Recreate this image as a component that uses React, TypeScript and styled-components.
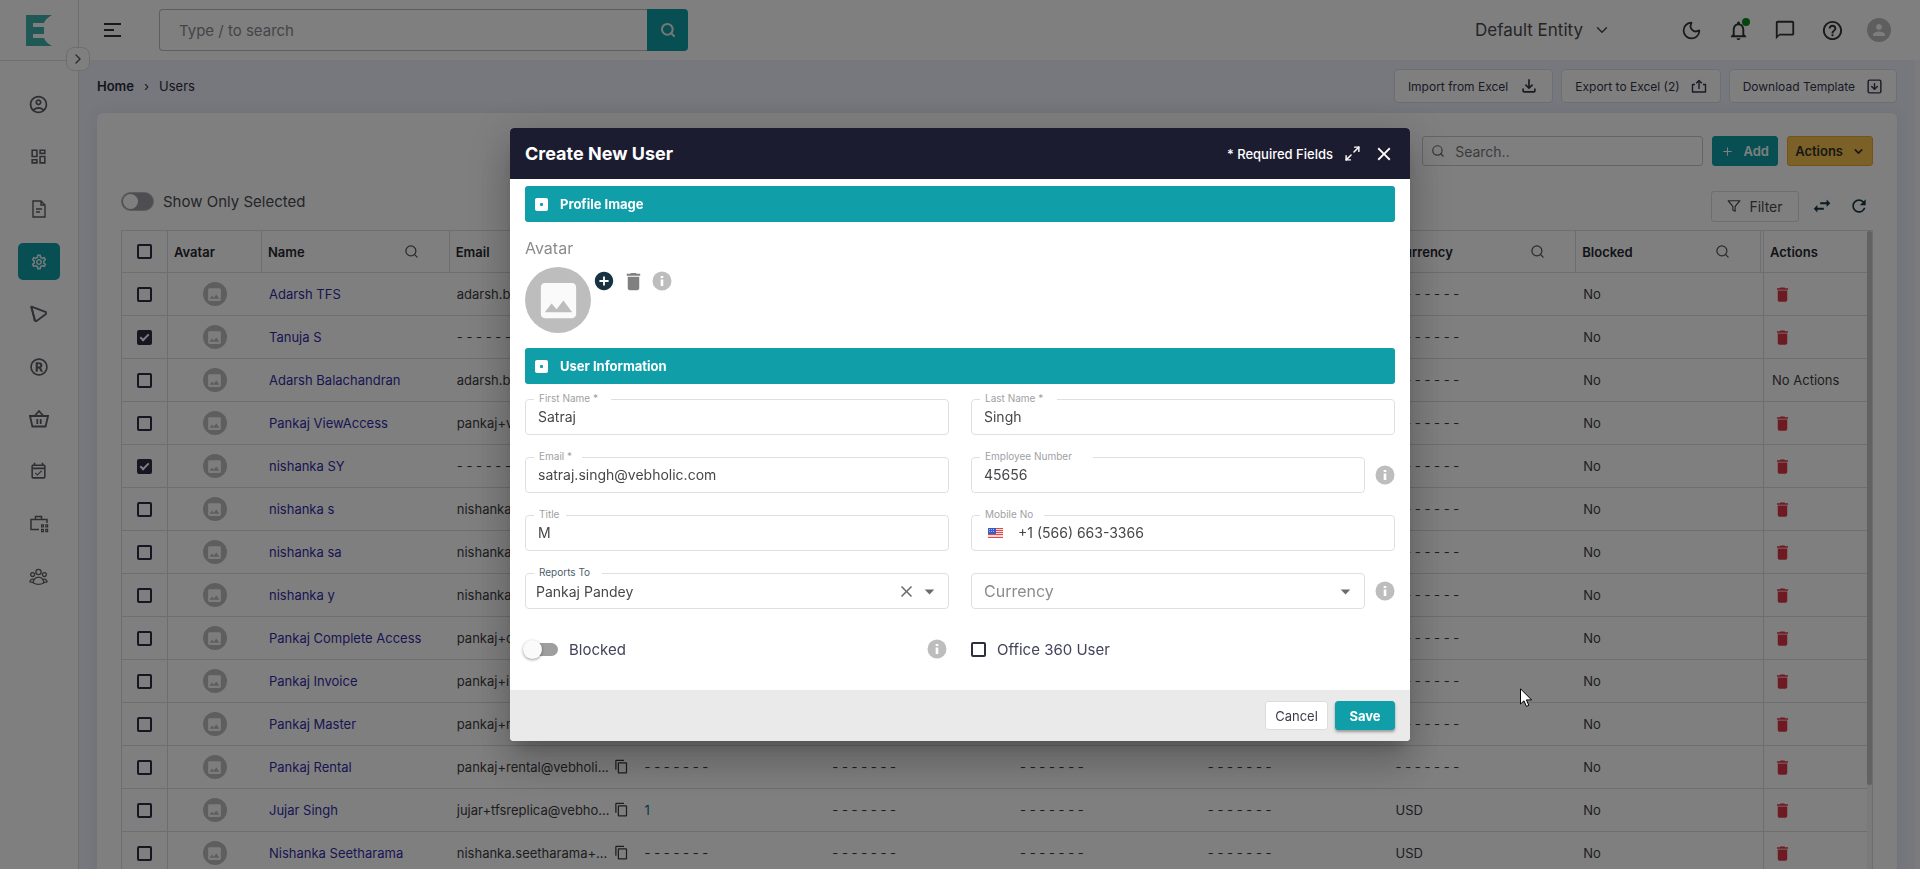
import React from "react";
import styled, { createGlobalStyle } from "styled-components";
import {
  MdAddCircle,
  MdArrowDropDown,
  MdChatBubbleOutline,
  MdClose,
  MdContentCopy,
  MdDelete,
  MdHelpOutline,
  MdImage,
  MdNotificationsNone,
  MdOutlineAccountCircle,
  MdOutlineDashboard,
  MdOutlineEventAvailable,
  MdOutlineFileDownload,
  MdOutlineSettings,
  MdPerson,
  MdRefresh,
  MdSwapHoriz,
} from "react-icons/md";
import { HiOutlineUserGroup } from "react-icons/hi2";
import { FaRegRegistered } from "react-icons/fa";
import { FiFilter } from "react-icons/fi";
import {
  ChevronDown,
  ChevronRight,
  Maximize2,
  Moon,
  Plus,
  Search,
  SquareArrowDown,
} from "lucide-react";

const c = {
  teal: "#109fa9",
  navy: "#1c1c30",
  ink: "#2d2d44",
  line: "#dcdce0",
  text: "#3c3c42",
  muted: "#8c8c8c",
  link: "#332ba6",
  red: "#dc3545",
};

const GlobalStyle = createGlobalStyle`
  *, *::before, *::after { box-sizing: border-box; }
  body { margin: 0; background: #fff; }
  body, button, input, select { font-family: Inter, "Noto Sans", sans-serif; }
  button { padding: 0; border: 0; background: none; color: inherit; cursor: pointer; }
  a { color: inherit; text-decoration: none; }
  svg { display: block; flex: none; }
`;

/* ---------- application shell ---------- */

const Shell = styled.div`
  display: flex;
  height: 100vh;
  overflow: hidden;
`;

const Sidebar = styled.nav`
  position: relative;
  flex: 0 0 79px;
  border-right: 1px solid ${c.line};
  background: #fff;
`;

const LogoBox = styled.a`
  display: flex;
  align-items: center;
  height: 61px;
  padding-left: 26px;
  border-bottom: 1px solid ${c.line};
`;

const ExpandButton = styled.button`
  position: absolute;
  top: 47px;
  right: -12px;
  z-index: 1;
  display: grid;
  place-items: center;
  width: 24px;
  height: 24px;
  border: 1px solid ${c.line};
  border-radius: 8px;
  background: #fff;
  color: #555;
`;

const NavList = styled.ul`
  display: flex;
  flex-direction: column;
  justify-content: space-between;
  height: 534px;
  margin: 0;
  padding: 25px 18px 0;
  list-style: none;
`;

const NavLink = styled.a<{ $active?: boolean }>`
  display: grid;
  place-items: center;
  width: 42px;
  height: 37px;
  padding-right: 1px;
  border-radius: 5px;
  background: ${(p) => (p.$active ? c.teal : "transparent")};
  color: ${(p) => (p.$active ? "#e8f4f6" : "#5f5f66")};
`;

const Page = styled.div`
  display: flex;
  flex: 1;
  flex-direction: column;
  min-width: 0;
`;

const TopBar = styled.header`
  display: flex;
  flex: none;
  align-items: center;
  height: 60px;
  padding: 0 29px 0 25px;
  background: #fff;
  color: #333;
`;

const GlobalSearch = styled.form`
  display: flex;
  width: 529px;
  height: 42px;
  margin-left: 38px;
`;

const GlobalInput = styled.input`
  flex: 1;
  min-width: 0;
  padding: 0 19px;
  border: 1px solid #bdbdc2;
  border-right: 0;
  border-radius: 4px 0 0 4px;
  font-size: 15px;
  color: #333;
  &::placeholder { color: #8a8a92; }
`;

const GlobalSubmit = styled.button`
  display: grid;
  place-items: center;
  width: 41px;
  border-radius: 0 4px 4px 0;
  background: ${c.teal};
  color: #eee;
`;

const EntityButton = styled.button`
  display: flex;
  align-items: center;
  gap: 10px;
  margin: 0 68px 0 auto;
  font-size: 17px;
  color: #4a4a50;
`;

const TopActions = styled.div`
  display: flex;
  align-items: center;
  gap: 23px;
`;

const TopAction = styled.button`
  position: relative;
  display: grid;
  place-items: center;
  width: 24px;
  height: 24px;
`;

const StatusDot = styled.span`
  position: absolute;
  top: 0;
  right: 0;
  width: 8px;
  height: 8px;
  border-radius: 50%;
  background: #0a8a1e;
`;

const ProfileDisc = styled.span`
  display: grid;
  place-items: center;
  width: 24px;
  height: 24px;
  border-radius: 50%;
  background: #bdbdbd;
  color: #fafafa;
`;

const Content = styled.main`
  display: flex;
  flex: 1;
  flex-direction: column;
  min-height: 0;
  padding: 9px 18px 0;
  border-right: 5px solid #f7f7fb;
  background: #eeeffc;
  overflow: hidden;
`;

const PageHead = styled.div`
  display: flex;
  flex: none;
  align-items: center;
  justify-content: space-between;
  margin-bottom: 10px;
`;

const Crumbs = styled.nav`
  display: flex;
  align-items: center;
  gap: 10px;
  font-size: 13px;
  color: #2b2b38;
  & > a { font-weight: 600; }
`;

const HeadActions = styled.div`
  display: flex;
  gap: 8px;
`;

const HeadButton = styled.button`
  display: flex;
  align-items: center;
  gap: 11px;
  height: 34px;
  padding: 0 13px;
  border: 1px solid ${c.line};
  border-radius: 4px;
  background: #fff;
  font-size: 12px;
  color: #35354a;
`;

const Card = styled.section`
  flex: none;
  padding: 23px 24px;
  border-radius: 6px;
  background: #fff;
  box-shadow: 0 0 14px rgba(60, 60, 110, 0.08);
`;

const SearchRow = styled.div`
  display: flex;
  justify-content: flex-end;
  gap: 9px;
  height: 30px;
`;

const ListSearch = styled.label`
  display: flex;
  align-items: center;
  gap: 8px;
  width: 281px;
  padding-left: 8px;
  border: 1px solid #c9c9ce;
  border-radius: 3px;
  color: #66666c;
`;

const ListSearchInput = styled.input`
  flex: 1;
  min-width: 0;
  border: 0;
  outline: 0;
  background: none;
  font-size: 14px;
  &::placeholder { color: #77777d; }
`;

const SolidButton = styled.button<{ $tone: "teal" | "amber" }>`
  display: flex;
  align-items: center;
  justify-content: center;
  gap: 9px;
  min-width: 66px;
  padding: 0 7px;
  border: 1px solid ${(p) => (p.$tone === "teal" ? c.teal : "#eda431")};
  border-radius: 3px;
  background: ${(p) => (p.$tone === "teal" ? c.teal : "#f6c350")};
  color: ${(p) => (p.$tone === "teal" ? "#fff" : "#33302a")};
  font-size: 13px;
  font-weight: 600;
`;

const FilterRow = styled.div`
  display: flex;
  align-items: center;
  justify-content: space-between;
  height: 30px;
  margin: 25px 0 9px;
`;

const SelectedToggle = styled.label`
  display: flex;
  align-items: center;
  align-self: flex-start;
  gap: 9px;
  height: 20px;
  font-size: 15px;
  color: #4a4a52;
`;

const PillSwitch = styled.input`
  appearance: none;
  width: 33px;
  height: 19px;
  margin: 0;
  padding: 1px;
  border: 1px solid #bbb;
  border-radius: 10px;
  background: #9c9ca0;
  &::before {
    content: "";
    display: block;
    width: 15px;
    height: 15px;
    border-radius: 50%;
    background: #fff;
  }
`;

const FilterTools = styled.div`
  display: flex;
  align-items: center;
  padding-right: 5px;
  color: #173642;
`;

const FilterButton = styled.button`
  display: flex;
  align-items: center;
  justify-content: center;
  gap: 8px;
  width: 88px;
  height: 31px;
  margin-right: 13px;
  border: 1px solid ${c.line};
  border-radius: 3px;
  font-size: 14px;
  color: #4a4a50;
`;

const ToolButton = styled.button`
  display: flex;
  align-items: center;
  justify-content: center;
  width: 19px;
  height: 24px;
  & + & { margin-left: 18px; }
`;

/* ---------- users table ---------- */

const TableFrame = styled.div`
  display: grid;
  grid-template-columns: minmax(0, 1fr) 5px;
  border: 1px solid ${c.line};
`;

const Table = styled.table`
  width: 100%;
  border-spacing: 0;
  table-layout: fixed;
  font-size: 13px;
`;

const Col = styled.col<{ $w: number }>`
  width: ${(p) => p.$w}px;
`;

const Th = styled.th<{ $double?: boolean }>`
  height: 42px;
  padding: 0 ${(p) => (p.$double ? 2 : 0)}px 0 0;
  border-bottom: 1px solid ${c.line};
  border-left: 1px solid ${c.line};
  text-align: left;
  font-weight: 600;
  color: #26262e;
  &:first-child { border-left: 0; }
`;

const HeadCell = styled.div<{ $line?: boolean }>`
  display: flex;
  align-items: center;
  justify-content: space-between;
  height: 41px;
  padding: 0 30px 0 6px;
  border-right: ${(p) => (p.$line ? 1 : 0)}px solid ${c.line};
  svg { color: #55555c; }
`;

const Td = styled.td<{ $lined?: boolean; $center?: boolean }>`
  height: 43px;
  padding: 0 8px;
  border-bottom: 1px solid ${c.line};
  border-left: ${(p) => (p.$lined ? 1 : 0)}px solid ${c.line};
  text-align: ${(p) => (p.$center ? "center" : "left")};
  white-space: nowrap;
  color: ${c.text};
`;

const Box = styled.input`
  position: relative;
  display: block;
  appearance: none;
  flex: none;
  width: 15px;
  height: 15px;
  margin: 0;
  border: 2px solid ${c.ink};
  border-radius: 2px;
  td &, th & { margin: 0 auto; }
  &:checked { background: ${c.ink}; }
  &:checked::after {
    content: "";
    position: absolute;
    top: 0;
    left: 3px;
    width: 5px;
    height: 9px;
    border: solid #fff;
    border-width: 0 2px 2px 0;
    transform: rotate(45deg);
  }
`;

const Disc = styled.span<{ $size: number }>`
  display: grid;
  flex: none;
  place-items: center;
  width: ${(p) => p.$size}px;
  height: ${(p) => p.$size}px;
  border-radius: 50%;
  background: #bdbdbd;
  color: #fafafa;
  td & { margin: 0 auto; }
`;

const NameLink = styled.a`
  color: ${c.link};
`;

const EmailCell = styled.span`
  display: flex;
  justify-content: space-between;
`;

const CountLink = styled.a`
  color: #0d6f8c;
`;

const RowDelete = styled.button`
  display: block;
  margin-left: 1px;
  color: ${c.red};
`;

const ScrollTrack = styled.div`
  background: #f4f4f4;
`;

const ScrollThumb = styled.div`
  height: 554px;
  border-radius: 3px;
  background: #c4c4c4;
`;

/* ---------- dialog ---------- */

const Backdrop = styled.div`
  position: fixed;
  inset: 0;
  z-index: 10;
  display: grid;
  place-items: center;
  background: rgba(0, 0, 0, 0.5);
`;

const Dialog = styled.div`
  width: 900px;
  max-width: 94vw;
  border-radius: 4px;
  background: #fff;
  overflow: hidden;
  box-shadow: 0 11px 15px -7px rgba(0, 0, 0, 0.2), 0 24px 38px 3px rgba(0, 0, 0, 0.14),
    0 9px 46px 8px rgba(0, 0, 0, 0.12);
`;

const DialogHead = styled.header`
  display: flex;
  align-items: center;
  height: 51px;
  padding: 0 16px 0 15px;
  background: ${c.navy};
  color: #fff;
`;

const DialogTitle = styled.h2`
  margin: 0 auto 0 0;
  font-size: 18px;
  font-weight: 700;
`;

const RequiredNote = styled.span`
  margin-right: 9px;
  font-size: 13px;
  font-weight: 500;
`;

const HeadIconButton = styled.button`
  display: flex;
  align-items: center;
  justify-content: center;
  width: 20px;
  height: 24px;
  & + & { margin-left: 12px; }
`;

const DialogBody = styled.form`
  padding: 7px 15px 29px;
`;

const SectionBar = styled.h3`
  display: flex;
  align-items: center;
  gap: 12px;
  height: 36px;
  margin: 0;
  padding-left: 10px;
  border-radius: 3px;
  background: ${c.teal};
  font-size: 13px;
  font-weight: 700;
  color: #fff;
`;

const SectionMark = styled.span`
  display: grid;
  place-items: center;
  width: 13px;
  height: 13px;
  border-radius: 2px;
  background: #fff;
  &::after {
    content: "";
    width: 3px;
    height: 3px;
    border-radius: 1px;
    background: ${c.teal};
  }
`;

const AvatarLabel = styled.div`
  margin: 16px 0 9px;
  font-size: 16px;
  line-height: 20px;
  color: ${c.muted};
`;

const AvatarRow = styled.div`
  display: flex;
  margin-bottom: 15px;
`;

const AvatarTools = styled.div`
  display: flex;
  gap: 9px;
  height: 20px;
  margin: 4px 0 0 3px;
`;

const IconButton = styled.button<{ $color: string }>`
  display: flex;
  align-items: center;
  justify-content: center;
  flex: none;
  width: 20px;
  height: 20px;
  color: ${(p) => p.$color};
`;

const FieldGrid = styled.div`
  display: grid;
  grid-template-columns: 1fr 1fr;
  gap: 22px;
  margin-top: 15px;
`;

const FieldCell = styled.div`
  display: flex;
  align-items: center;
  gap: 10px;
`;

const FieldFrame = styled.div`
  position: relative;
  display: flex;
  align-items: center;
  flex: 1;
  height: 36px;
  border: 1px solid #dfdfe1;
  border-radius: 4px;
  color: #6c6c70;
`;

const FieldLabel = styled.label<{ $notch: number; $dark?: boolean }>`
  position: absolute;
  top: -9px;
  left: 8px;
  width: ${(p) => p.$notch}px;
  padding-left: 5px;
  background: #fff;
  font-size: 10px;
  line-height: 14px;
  white-space: nowrap;
  color: ${(p) => (p.$dark ? "#4b5d6b" : "#a0a0a4")};
`;

const TextInput = styled.input`
  flex: 1;
  min-width: 0;
  height: 32px;
  padding: 0 12px 2px;
  border: 0;
  outline: 0;
  background: none;
  font-size: 14px;
  color: #47474b;
`;

const PickList = styled.select<{ $empty?: boolean }>`
  appearance: none;
  flex: 1;
  min-width: 0;
  height: 32px;
  padding: 0 ${(p) => (p.$empty ? 12 : 10)}px;
  border: 0;
  outline: 0;
  background: none;
  font-size: ${(p) => (p.$empty ? 16 : 14)}px;
  color: ${(p) => (p.$empty ? c.muted : "#47474b")};
`;

const Flag = styled.span`
  margin-left: 16px;
  margin-right: 3px;
`;

const PickTools = styled.div`
  display: flex;
  align-items: center;
  gap: 2px;
  padding-right: 7px;
`;

const OptionGrid = styled.div`
  display: grid;
  grid-template-columns: 1fr 1fr;
  gap: 22px;
  margin-top: 28px;
`;

const OptionCell = styled.div`
  display: flex;
  align-items: center;
  justify-content: space-between;
  height: 24px;
  padding-right: 2px;
`;

const OptionLabel = styled.label`
  display: flex;
  align-items: center;
  gap: 11px;
  font-size: 15px;
  color: #43435c;
`;

const ThumbSwitch = styled.input`
  position: relative;
  appearance: none;
  width: 33px;
  height: 13px;
  margin: 0;
  border-radius: 7px;
  background: #9e9e9e;
  &::before {
    content: "";
    position: absolute;
    top: -3px;
    left: -2px;
    width: 19px;
    height: 19px;
    border-radius: 50%;
    background: #fafafa;
    box-shadow: 0 1px 3px rgba(0, 0, 0, 0.4);
  }
`;

const DialogFoot = styled.footer`
  display: flex;
  justify-content: flex-end;
  gap: 7px;
  height: 51px;
  padding: 11px 15px;
  background: #eaeaea;
`;

const FootButton = styled.button<{ $primary?: boolean }>`
  width: ${(p) => (p.$primary ? 60 : 63)}px;
  border: 1px solid ${(p) => (p.$primary ? c.teal : "#dcdcdc")};
  border-radius: 3px;
  background: ${(p) => (p.$primary ? c.teal : "#fff")};
  box-shadow: ${(p) => (p.$primary ? "0 2px 3px rgba(0, 0, 0, 0.35)" : "none")};
  font-size: 13px;
  font-weight: ${(p) => (p.$primary ? 700 : 400)};
  color: ${(p) => (p.$primary ? "#fff" : "#3c3c4c")};
`;

const Pointer = styled.svg`
  position: fixed;
  top: 688px;
  left: 1520px;
  z-index: 20;
`;

/* ---------- drawings ---------- */

const Logo = () => (
  <svg width="26" height="31" viewBox="0 0 26 31" aria-label="Home">
    <path
      d="M0 0H26C22 2 19 5 18 8H7V12H18V19H7V23H18C19 26 22 29 26 31H0Z"
      fill="#3fb0a8"
    />
  </svg>
);

const MenuIcon = () => (
  <svg width="17" height="14" viewBox="0 0 17 14" stroke="#333" strokeWidth="2">
    <path d="M0 1H17M0 7H10M0 13H17" />
  </svg>
);

const DocIcon = () => (
  <svg width="18" height="20" viewBox="0 0 18 20" fill="none" stroke="currentColor" strokeWidth="1.4">
    <path d="M3 2H11L15 6V18H3ZM11 2V6H15M6 10H12M6 13H10" />
  </svg>
);

const PlayIcon = () => (
  <svg width="20" height="20" viewBox="0 0 20 20" fill="none" stroke="currentColor" strokeWidth="1.8" strokeLinejoin="round">
    <path d="M2.5 2.6L17 8.2V10L7.2 17.2L5.6 16.5Z" />
    <path d="M2 2.5L6.5 17.5" />
  </svg>
);

const BasketIcon = () => (
  <svg width="20" height="20" viewBox="0 0 20 20" fill="none" stroke="currentColor" strokeWidth="1.8">
    <path d="M1 7H19L16.6 17.5H3.4ZM6 6.5L10 2L14 6.5M8.3 10V15M11.7 10V15" />
  </svg>
);

const CaseIcon = () => (
  <svg width="20" height="20" viewBox="0 0 20 20" fill="none" stroke="currentColor" strokeWidth="1.5">
    <path d="M10 15.5H2V5.5H18V9M6.5 5V2.5H12.5V5" />
    <path d="M12.6 10.8h1.8v2.2h-1.8zM16.8 10.8h1.8v2.2h-1.8zM12.6 15.4h1.8v2.2h-1.8zM16.8 15.4h1.8v2.2h-1.8z" strokeWidth="1.2" />
  </svg>
);

const ExportIcon = () => (
  <svg width="16" height="16" viewBox="0 0 16 16" fill="none" stroke="currentColor" strokeWidth="1.4" strokeLinejoin="round">
    <path d="M4 6.5H1.5V14H14.5V6.5H12M8 11V2.5M5.2 5.2L8 2.4L10.8 5.2" />
  </svg>
);

const InfoIcon = () => (
  <svg width="20" height="20" viewBox="0 0 20 20">
    <circle cx="10" cy="10" r="9.5" fill="currentColor" />
    <path d="M8.7 5H11.3V7H8.7ZM8.7 8.5H11.3V15H8.7Z" fill="#fff" />
  </svg>
);

const UsFlag = () => (
  <svg width="15" height="10" viewBox="0 0 15 10" role="img" aria-label="United States">
    <rect width="15" height="10" fill="#f6dcdc" />
    <path d="M0 .5H15M0 2.5H15M0 4.5H15M0 6.5H15M0 9.5H15" stroke="#e2464d" />
    <rect width="8" height="6" fill="#3c5bc4" />
    <path d="M1 1.5H7M1 3.5H7" stroke="#9db2ee" strokeDasharray="1 1" />
  </svg>
);

/* ---------- data ---------- */

const BLANK = "- - - - - - -";

interface User {
  name: string;
  email: string;
  picked?: boolean;
  copy?: boolean;
  count?: string;
  currency?: string;
  locked?: boolean;
}

const users: User[] = [
  { name: "Adarsh TFS", email: "adarsh.b" },
  { name: "Tanuja S", email: BLANK, picked: true },
  { name: "Adarsh Balachandran", email: "adarsh.b", locked: true },
  { name: "Pankaj ViewAccess", email: "pankaj+v" },
  { name: "nishanka SY", email: BLANK, picked: true },
  { name: "nishanka s", email: "nishanka" },
  { name: "nishanka sa", email: "nishanka" },
  { name: "nishanka y", email: "nishanka" },
  { name: "Pankaj Complete Access", email: "pankaj+c" },
  { name: "Pankaj Invoice", email: "pankaj+i" },
  { name: "Pankaj Master", email: "pankaj+m" },
  { name: "Pankaj Rental", email: "pankaj+rental@vebholi...", copy: true },
  { name: "Jujar Singh", email: "jujar+tfsreplica@vebho...", copy: true, count: "1", currency: "USD" },
  { name: "Nishanka Seetharama", email: "nishanka.seetharama+...", copy: true, currency: "USD" },
];

const navItems = [
  { label: "Profile", icon: <MdOutlineAccountCircle size={21} /> },
  { label: "Dashboard", icon: <MdOutlineDashboard size={19} /> },
  { label: "Documents", icon: <DocIcon /> },
  { label: "Settings", icon: <MdOutlineSettings size={18} />, active: true },
  { label: "Campaigns", icon: <PlayIcon /> },
  { label: "Brands", icon: <FaRegRegistered size={18} /> },
  { label: "Orders", icon: <BasketIcon /> },
  { label: "Calendar", icon: <MdOutlineEventAvailable size={19} /> },
  { label: "Business", icon: <CaseIcon /> },
  { label: "Teams", icon: <HiOutlineUserGroup size={21} /> },
];

/* ---------- parts ---------- */

function SearchableHead({ title, line }: { title?: string; line?: boolean }) {
  return (
    <Th scope="col" $double={line}>
      <HeadCell $line={line}>
        <span>{title}</span>
        <Search size={15} strokeWidth={2} />
      </HeadCell>
    </Th>
  );
}

function UserRow({ user }: { user: User }) {
  return (
    <tr>
      <Td>
        <Box type="checkbox" defaultChecked={user.picked} aria-label={`Select ${user.name}`} />
      </Td>
      <Td $lined $center>
        <Disc $size={24}>
          <MdImage size={17} />
        </Disc>
      </Td>
      <Td>
        <NameLink href="#user">{user.name}</NameLink>
      </Td>
      <Td>
        <EmailCell>
          {user.email}
          {user.copy && <MdContentCopy size={15} />}
        </EmailCell>
      </Td>
      <Td>{user.count ? <CountLink href="#count">{user.count}</CountLink> : BLANK}</Td>
      <Td>{BLANK}</Td>
      <Td>{BLANK}</Td>
      <Td>{BLANK}</Td>
      <Td>{user.currency ?? BLANK}</Td>
      <Td>No</Td>
      <Td $lined>
        {user.locked ? (
          "No Actions"
        ) : (
          <RowDelete aria-label={`Delete ${user.name}`}>
            <MdDelete size={19} />
          </RowDelete>
        )}
      </Td>
    </tr>
  );
}

function InfoButton() {
  return (
    <IconButton type="button" $color="#bdbdbd" aria-label="More information">
      <InfoIcon />
    </IconButton>
  );
}

interface FieldProps {
  id: string;
  label: string;
  notch: number;
  value: string;
  info?: boolean;
  lead?: React.ReactNode;
}

function Field({ id, label, notch, value, info, lead }: FieldProps) {
  return (
    <FieldCell>
      <FieldFrame>
        <FieldLabel htmlFor={id} $notch={notch}>
          {label}
        </FieldLabel>
        {lead}
        <TextInput id={id} defaultValue={value} />
      </FieldFrame>
      {info && <InfoButton />}
    </FieldCell>
  );
}

function CreateUserDialog() {
  return (
    <Backdrop>
      <Dialog role="dialog" aria-labelledby="dialog-title">
        <DialogHead>
          <DialogTitle id="dialog-title">Create New User</DialogTitle>
          <RequiredNote>* Required Fields</RequiredNote>
          <HeadIconButton aria-label="Expand">
            <Maximize2 size={17} strokeWidth={2} />
          </HeadIconButton>
          <HeadIconButton aria-label="Close">
            <MdClose size={22} />
          </HeadIconButton>
        </DialogHead>
        <DialogBody>
          <SectionBar>
            <SectionMark />
            Profile Image
          </SectionBar>
          <AvatarLabel>Avatar</AvatarLabel>
          <AvatarRow>
            <Disc $size={66}>
              <MdImage size={47} />
            </Disc>
            <AvatarTools>
              <IconButton type="button" $color="#173240" aria-label="Add avatar">
                <MdAddCircle size={22} />
              </IconButton>
              <IconButton type="button" $color="#808080" aria-label="Remove avatar">
                <MdDelete size={23} />
              </IconButton>
              <InfoButton />
            </AvatarTools>
          </AvatarRow>
          <SectionBar>
            <SectionMark />
            User Information
          </SectionBar>
          <FieldGrid>
            <Field id="first" label="First Name *" notch={77} value="Satraj" />
            <Field id="last" label="Last Name *" notch={77} value="Singh" />
            <Field id="email" label="Email *" notch={48} value="satraj.singh@vebholic.com" />
            <Field id="employee" label="Employee Number" notch={113} value="45656" info />
            <Field id="title" label="Title" notch={32} value="M" />
            <Field
              id="mobile"
              label="Mobile No"
              notch={64}
              value="+1 (566) 663-3366"
              lead={
                <Flag>
                  <UsFlag />
                </Flag>
              }
            />
            <FieldCell>
              <FieldFrame>
                <FieldLabel htmlFor="reports" $notch={68} $dark>
                  Reports To
                </FieldLabel>
                <PickList id="reports">
                  <option>Pankaj Pandey</option>
                </PickList>
                <PickTools>
                  <IconButton type="button" $color="#6c6c70" aria-label="Clear">
                    <MdClose size={19} />
                  </IconButton>
                  <MdArrowDropDown size={23} />
                </PickTools>
              </FieldFrame>
            </FieldCell>
            <FieldCell>
              <FieldFrame>
                <PickList aria-label="Currency" $empty>
                  <option>Currency</option>
                </PickList>
                <PickTools>
                  <MdArrowDropDown size={23} />
                </PickTools>
              </FieldFrame>
              <InfoButton />
            </FieldCell>
          </FieldGrid>
          <OptionGrid>
            <OptionCell>
              <OptionLabel>
                <ThumbSwitch type="checkbox" role="switch" />
                Blocked
              </OptionLabel>
              <InfoButton />
            </OptionCell>
            <OptionCell>
              <OptionLabel>
                <Box type="checkbox" />
                Office 360 User
              </OptionLabel>
            </OptionCell>
          </OptionGrid>
        </DialogBody>
        <DialogFoot>
          <FootButton>Cancel</FootButton>
          <FootButton $primary>Save</FootButton>
        </DialogFoot>
      </Dialog>
    </Backdrop>
  );
}

export default function App() {
  return (
    <>
      <GlobalStyle />
      <Shell>
        <Sidebar>
          <LogoBox href="#home">
            <Logo />
          </LogoBox>
          <ExpandButton aria-label="Expand sidebar">
            <ChevronRight size={16} strokeWidth={2} />
          </ExpandButton>
          <NavList>
            {navItems.map((item) => (
              <li key={item.label}>
                <NavLink href="#nav" $active={item.active} aria-label={item.label}>
                  {item.icon}
                </NavLink>
              </li>
            ))}
          </NavList>
        </Sidebar>
        <Page>
          <TopBar>
            <button aria-label="Menu">
              <MenuIcon />
            </button>
            <GlobalSearch>
              <GlobalInput placeholder="Type / to search" aria-label="Search" />
              <GlobalSubmit type="button" aria-label="Run search">
                <Search size={16} strokeWidth={3} />
              </GlobalSubmit>
            </GlobalSearch>
            <EntityButton>
              Default Entity
              <ChevronDown size={18} strokeWidth={2} />
            </EntityButton>
            <TopActions>
              <TopAction aria-label="Dark mode">
                <Moon size={21} strokeWidth={2} />
              </TopAction>
              <TopAction aria-label="Notifications">
                <MdNotificationsNone size={23} />
                <StatusDot />
              </TopAction>
              <TopAction aria-label="Messages">
                <MdChatBubbleOutline size={22} />
              </TopAction>
              <TopAction aria-label="Help">
                <MdHelpOutline size={23} />
              </TopAction>
              <TopAction aria-label="Account">
                <ProfileDisc>
                  <MdPerson size={18} />
                </ProfileDisc>
              </TopAction>
            </TopActions>
          </TopBar>
          <Content>
            <PageHead>
              <Crumbs aria-label="Breadcrumb">
                <a href="#home">Home</a>
                <span>›</span>
                <span>Users</span>
              </Crumbs>
              <HeadActions>
                <HeadButton>
                  Import from Excel
                  <MdOutlineFileDownload size={20} />
                </HeadButton>
                <HeadButton>
                  Export to Excel (2)
                  <ExportIcon />
                </HeadButton>
                <HeadButton>
                  Download Template
                  <SquareArrowDown size={17} strokeWidth={2} />
                </HeadButton>
              </HeadActions>
            </PageHead>
            <Card>
              <SearchRow>
                <ListSearch>
                  <Search size={14} strokeWidth={2} />
                  <ListSearchInput placeholder="Search.." aria-label="Search users" />
                </ListSearch>
                <SolidButton $tone="teal">
                  <Plus size={13} strokeWidth={2} />
                  Add
                </SolidButton>
                <SolidButton $tone="amber">
                  Actions
                  <ChevronDown size={13} strokeWidth={3} />
                </SolidButton>
              </SearchRow>
              <FilterRow>
                <SelectedToggle>
                  <PillSwitch type="checkbox" role="switch" />
                  Show Only Selected
                </SelectedToggle>
                <FilterTools>
                  <FilterButton>
                    <FiFilter size={14} />
                    Filter
                  </FilterButton>
                  <ToolButton aria-label="Swap columns">
                    <MdSwapHoriz size={22} />
                  </ToolButton>
                  <ToolButton aria-label="Refresh">
                    <MdRefresh size={20} />
                  </ToolButton>
                </FilterTools>
              </FilterRow>
              <TableFrame>
                <Table>
                  <colgroup>
                    <Col $w={45} />
                    <Col $w={94} />
                    <col span={8} />
                    <Col $w={104} />
                  </colgroup>
                  <thead>
                    <tr>
                      <Th scope="col">
                        <Box type="checkbox" aria-label="Select all" />
                      </Th>
                      <Th scope="col">
                        <HeadCell>Avatar</HeadCell>
                      </Th>
                      <SearchableHead title="Name" />
                      <SearchableHead title="Email" />
                      <SearchableHead />
                      <SearchableHead />
                      <SearchableHead />
                      <SearchableHead />
                      <SearchableHead title="Currency" />
                      <SearchableHead title="Blocked" line />
                      <Th scope="col">
                        <HeadCell>Actions</HeadCell>
                      </Th>
                    </tr>
                  </thead>
                  <tbody>
                    {users.map((user) => (
                      <UserRow key={user.name} user={user} />
                    ))}
                  </tbody>
                </Table>
                <ScrollTrack>
                  <ScrollThumb />
                </ScrollTrack>
              </TableFrame>
            </Card>
          </Content>
        </Page>
      </Shell>
      <CreateUserDialog />
      <Pointer width="13" height="20" viewBox="0 0 13 20" aria-hidden="true">
        <path d="M.5 .8V16L4 12.8L6.4 18.4L8.8 17.3L6.4 11.9H11.6Z" fill="#fff" stroke="#000" />
      </Pointer>
    </>
  );
}
